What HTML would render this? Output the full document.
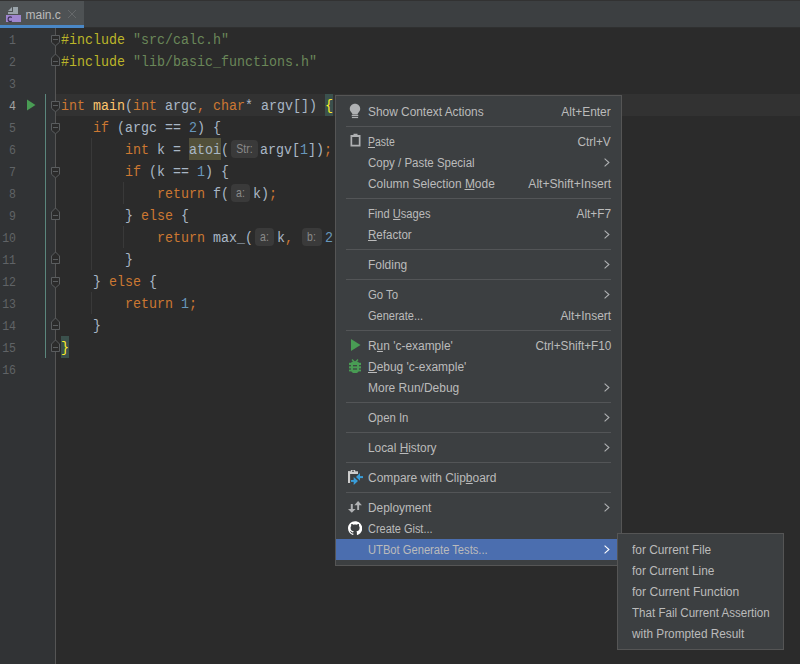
<!DOCTYPE html>
<html><head><meta charset="utf-8"><style>
*{margin:0;padding:0;box-sizing:border-box}
html,body{width:800px;height:664px;overflow:hidden;background:#2B2B2B}
body{position:relative;font-family:"Liberation Sans",sans-serif}
#tabbar{position:absolute;left:0;top:0;width:800px;height:28px;background:#3C3F41;border-top:1px solid #323232;border-bottom:1px solid #2F3030}
#tab{position:absolute;left:0;top:0;width:84px;height:27px;background:#4E5254}
#tab .ul{position:absolute;left:0;top:24px;width:84px;height:3px;background:#4A88C7}
#tab .name{position:absolute;left:25.5px;top:7px;font-size:12px;color:#BBBBBB;line-height:15px}
#tab .x{position:absolute;left:67px;top:8px}
#gutter{position:absolute;left:0;top:28px;width:55px;height:636px;background:#313335}
.curline{position:absolute;left:56px;top:94px;width:744px;height:22px;background:#323232}
.ln{position:absolute;left:0;width:16px;text-align:right;font-family:"Liberation Mono",monospace;font-size:11.5px;transform:translateY(2px) scaleY(1.09);transform-origin:0 14px;color:#606366;line-height:22px}
.code{position:absolute;left:61px;height:22px;font-family:"Liberation Mono",monospace;font-size:13.333px;line-height:22px;color:#A9B7C6;white-space:pre}
.code span{display:inline-block;vertical-align:top;height:22px}
.code{transform:translateY(2px) scaleY(1.15);transform-origin:0 14px}
.kw{color:#CC7832}.pp{color:#BBB529}.str{color:#6A8759}.num{color:#6897BB}.fn{color:#FFC66D}
.br{color:#FFEF28}
.bg{position:absolute}
.hint{position:relative}
.hint i{position:absolute;top:0px;height:18px;color:#8A8A8A;font-style:normal;font-family:"Liberation Sans",sans-serif;font-size:10.5px;line-height:18px;text-align:center}
#menu{position:absolute;left:335px;top:95px;width:287px;height:471px;background:#3C3F41;border:1px solid #555555}
.mi{position:absolute;left:0;width:285px;height:21px;font-size:12px;line-height:21px;color:#BBBBBB;white-space:nowrap}
.mi .t{position:absolute;left:32px;top:1px;transform-origin:0 0}
.mi .k{position:absolute;right:10px;top:1px;transform-origin:100% 0}
.mi svg{position:absolute}
.sep{position:absolute;left:10px;width:265px;height:1px;background:#535557}
.sel{background:#4B6EAF}
.u{position:relative}
.u:after{content:"";position:absolute;left:0;right:0;top:12px;height:1px;background:#BBBBBB}
#sub{position:absolute;left:617px;top:533px;width:167px;height:117px;background:#3C3F41;border:1px solid #555555}
.si{position:absolute;transform-origin:0 0;left:14px;height:21px;padding-top:1px;font-size:12px;line-height:21px;color:#BBBBBB;white-space:nowrap}
</style></head><body>
<div id="tabbar"><div id="tab">
<svg style="position:absolute;left:0;top:-1px" width="24" height="24" viewBox="0 0 24 24">
<path d="M8 11 L12 7 L12 11 Z" fill="#9AA4AB"/>
<path d="M13 7 H18 V14 H8 V12 H13 Z" fill="#9AA4AB"/>
<rect x="6" y="15" width="15" height="7" fill="#9F86CF"/>
<path d="M11.8 17.5 C11.3 17.1 10.8 16.9 10.2 16.9 C8.9 16.9 8.1 17.9 8.1 19.3 C8.1 20.7 8.9 21.6 10.2 21.6 C10.8 21.6 11.3 21.4 11.8 21" fill="none" stroke="#3A2F55" stroke-width="1.1"/>
</svg>
<div class="name">main.c</div>
<svg class="x" width="10" height="10" viewBox="0 0 10 10"><path d="M1 1 L9 9 M9 1 L1 9" stroke="#65686A" stroke-width="1"/></svg>
<div class="ul"></div></div></div>
<div id="gutter"></div>
<div class="curline"></div>
<svg style="position:absolute;left:0;top:0" width="62" height="664" viewBox="0 0 62 664">
<line x1="55.5" y1="28" x2="55.5" y2="664" stroke="#555555" stroke-width="1"/>
<line x1="45.5" y1="94" x2="45.5" y2="358" stroke="#5B877D" stroke-width="1"/>
<path d="M27 99.5 L35.5 105 L27 110.5 Z" fill="#499C54"/>
<path d="M51.5 35.5 H59.5 V42.3 L55.5 45.8 L51.5 42.3 Z" fill="#2B2B2B" stroke="#5A5D5F" stroke-width="1"/><line x1="53" y1="39.5" x2="58" y2="39.5" stroke="#5A5D5F"/>
<path d="M51.5 101.5 H59.5 V108.3 L55.5 111.8 L51.5 108.3 Z" fill="#2B2B2B" stroke="#5A5D5F" stroke-width="1"/><line x1="53" y1="105.5" x2="58" y2="105.5" stroke="#5A5D5F"/>
<path d="M51.5 123.5 H59.5 V130.3 L55.5 133.8 L51.5 130.3 Z" fill="#2B2B2B" stroke="#5A5D5F" stroke-width="1"/><line x1="53" y1="127.5" x2="58" y2="127.5" stroke="#5A5D5F"/>
<path d="M51.5 167.5 H59.5 V174.3 L55.5 177.8 L51.5 174.3 Z" fill="#2B2B2B" stroke="#5A5D5F" stroke-width="1"/><line x1="53" y1="171.5" x2="58" y2="171.5" stroke="#5A5D5F"/>
<path d="M51.5 277.5 H59.5 V284.3 L55.5 287.8 L51.5 284.3 Z" fill="#2B2B2B" stroke="#5A5D5F" stroke-width="1"/><line x1="53" y1="281.5" x2="58" y2="281.5" stroke="#5A5D5F"/>
<path d="M51.5 65.5 H59.5 V58 L55.5 54 L51.5 58 Z" fill="#2B2B2B" stroke="#5A5D5F" stroke-width="1"/><line x1="53" y1="61.5" x2="58" y2="61.5" stroke="#5A5D5F"/>
<path d="M51.5 219.5 H59.5 V212 L55.5 208 L51.5 212 Z" fill="#2B2B2B" stroke="#5A5D5F" stroke-width="1"/><line x1="53" y1="215.5" x2="58" y2="215.5" stroke="#5A5D5F"/>
<path d="M51.5 263.5 H59.5 V256 L55.5 252 L51.5 256 Z" fill="#2B2B2B" stroke="#5A5D5F" stroke-width="1"/><line x1="53" y1="259.5" x2="58" y2="259.5" stroke="#5A5D5F"/>
<path d="M51.5 329.5 H59.5 V322 L55.5 318 L51.5 322 Z" fill="#2B2B2B" stroke="#5A5D5F" stroke-width="1"/><line x1="53" y1="325.5" x2="58" y2="325.5" stroke="#5A5D5F"/>
<path d="M51.5 351.5 H59.5 V344 L55.5 340 L51.5 344 Z" fill="#2B2B2B" stroke="#5A5D5F" stroke-width="1"/><line x1="53" y1="347.5" x2="58" y2="347.5" stroke="#5A5D5F"/>
</svg>
<div class="ln" style="top:28px;color:#606366">1</div>
<div class="ln" style="top:50px;color:#606366">2</div>
<div class="ln" style="top:72px;color:#606366">3</div>
<div class="ln" style="top:94px;color:#A4A3A3">4</div>
<div class="ln" style="top:116px;color:#606366">5</div>
<div class="ln" style="top:138px;color:#606366">6</div>
<div class="ln" style="top:160px;color:#606366">7</div>
<div class="ln" style="top:182px;color:#606366">8</div>
<div class="ln" style="top:204px;color:#606366">9</div>
<div class="ln" style="top:226px;color:#606366">10</div>
<div class="ln" style="top:248px;color:#606366">11</div>
<div class="ln" style="top:270px;color:#606366">12</div>
<div class="ln" style="top:292px;color:#606366">13</div>
<div class="ln" style="top:314px;color:#606366">14</div>
<div class="ln" style="top:336px;color:#606366">15</div>
<div class="ln" style="top:358px;color:#606366">16</div>
<div class="bg" style="left:325px;top:94px;width:8px;height:22px;background:#3B514D;border-radius:0px"></div>
<div class="bg" style="left:61px;top:336px;width:8px;height:22px;background:#3B514D;border-radius:0px"></div>
<div class="bg" style="left:189px;top:138px;width:32px;height:22px;background:#52503A;border-radius:0px"></div>
<div class="bg" style="left:231px;top:140px;width:27px;height:18px;background:#3A3A3A;border-radius:4px"></div>
<div class="bg" style="left:231px;top:184px;width:19px;height:18px;background:#3A3A3A;border-radius:4px"></div>
<div class="bg" style="left:255px;top:228px;width:19px;height:18px;background:#3A3A3A;border-radius:4px"></div>
<div class="bg" style="left:302px;top:228px;width:20px;height:18px;background:#3A3A3A;border-radius:4px"></div>
<div class="bg" style="left:91px;top:138px;width:1px;height:132px;background:#393939;border-radius:0px"></div>
<div class="bg" style="left:123px;top:182px;width:1px;height:22px;background:#393939;border-radius:0px"></div>
<div class="bg" style="left:123px;top:226px;width:1px;height:22px;background:#393939;border-radius:0px"></div>
<div class="bg" style="left:91px;top:292px;width:1px;height:22px;background:#393939;border-radius:0px"></div>
<div class="code" style="top:28px"><span class="pp">#include</span><span> </span><span class="str">"src/calc.h"</span></div>
<div class="code" style="top:50px"><span class="pp">#include</span><span> </span><span class="str">"lib/basic_functions.h"</span></div>
<div class="code" style="top:94px"><span class="kw">int</span><span> </span><span class="fn">main</span><span>(</span><span class="kw">int</span><span> argc</span><span class="kw">,</span><span> </span><span class="kw">char</span><span>* argv[]) </span><span class="br">{</span></div>
<div class="code" style="top:116px"><span>    </span><span class="kw">if</span><span> (argc == </span><span class="num">2</span><span>) {</span></div>
<div class="code" style="top:138px"><span>        </span><span class="kw">int</span><span> k = </span><span>atoi</span><span>(</span><span class="hint" style="width:31px"><i style="left:2px;width:27px">Str:</i></span><span>argv[</span><span class="num">1</span><span>])</span><span class="kw">;</span></div>
<div class="code" style="top:160px"><span>        </span><span class="kw">if</span><span> (k == </span><span class="num">1</span><span>) {</span></div>
<div class="code" style="top:182px"><span>            </span><span class="kw">return</span><span> f(</span><span class="hint" style="width:24px"><i style="left:2px;width:19px">a:</i></span><span>k)</span><span class="kw">;</span></div>
<div class="code" style="top:204px"><span>        } </span><span class="kw">else</span><span> {</span></div>
<div class="code" style="top:226px"><span>            </span><span class="kw">return</span><span> max_(</span><span class="hint" style="width:24px"><i style="left:2px;width:19px">a:</i></span><span>k</span><span class="kw">,</span><span> </span><span class="hint" style="width:24px"><i style="left:1px;width:19px">b:</i></span><span class="num">2</span><span>)</span><span class="kw">;</span></div>
<div class="code" style="top:248px"><span>        }</span></div>
<div class="code" style="top:270px"><span>    } </span><span class="kw">else</span><span> {</span></div>
<div class="code" style="top:292px"><span>        </span><span class="kw">return</span><span> </span><span class="num">1</span><span class="kw">;</span></div>
<div class="code" style="top:314px"><span>    }</span></div>
<div class="code" style="top:336px"><span class="br">}</span></div>
<div id="menu">
<div class="mi" style="top:5px"><svg style="left:13px;top:2px" width="12" height="17" viewBox="0 0 12 17"><path d="M6 0.8 C3.1 0.8 0.8 3 0.8 5.8 C0.8 7.6 1.7 8.7 2.6 9.7 C3.1 10.2 3.4 10.8 3.4 11.5 H8.6 C8.6 10.8 8.9 10.2 9.4 9.7 C10.3 8.7 11.2 7.6 11.2 5.8 C11.2 3 8.9 0.8 6 0.8 Z" fill="#AFB1B3"/><rect x="2.7" y="11.9" width="6.6" height="1.3" fill="#AFB1B3"/><rect x="2.9" y="14" width="6.2" height="1.1" fill="#AFB1B3"/></svg><span class="t" style="transform:scaleX(0.991)">Show Context Actions</span><span class="k" style="transform:scaleX(0.994)">Alt+Enter</span></div>
<div class="sep" style="top:30px"></div>
<div class="mi" style="top:35px"><svg style="left:14px;top:2px" width="11" height="14" viewBox="0 0 11 14"><path d="M0.5 2 H3.5 V0.8 H7.5 V2 H10.5 V13.5 H0.5 Z M2.2 4 V11.8 H8.8 V4 Z" fill="#AFB1B3" fill-rule="evenodd"/></svg><span class="t" style="transform:scaleX(0.871)"><span class="u">P</span>aste</span><span class="k" style="transform:scaleX(0.985)">Ctrl+V</span></div>
<div class="mi" style="top:56px"><span class="t" style="transform:scaleX(0.957)">Copy / Paste Special</span><svg style="left:267.5px;top:5.5px" width="7" height="10" viewBox="0 0 7 10"><path d="M0.6 0.6 L4.9 4.5 L0.6 8.4" fill="none" stroke="#AFB1B3" stroke-width="1.1"/></svg></div>
<div class="mi" style="top:77px"><span class="t" style="transform:scaleX(0.995)">Column Selection <span class="u">M</span>ode</span><span class="k" style="transform:scaleX(1.008)">Alt+Shift+Insert</span></div>
<div class="sep" style="top:102px"></div>
<div class="mi" style="top:107px"><span class="t" style="transform:scaleX(0.927)">Find <span class="u">U</span>sages</span><span class="k" style="transform:scaleX(0.986)">Alt+F7</span></div>
<div class="mi" style="top:128px"><span class="t" style="transform:scaleX(0.964)"><span class="u">R</span>efactor</span><svg style="left:267.5px;top:5.5px" width="7" height="10" viewBox="0 0 7 10"><path d="M0.6 0.6 L4.9 4.5 L0.6 8.4" fill="none" stroke="#AFB1B3" stroke-width="1.1"/></svg></div>
<div class="sep" style="top:153px"></div>
<div class="mi" style="top:158px"><span class="t" style="transform:scaleX(0.997)">Folding</span><svg style="left:267.5px;top:5.5px" width="7" height="10" viewBox="0 0 7 10"><path d="M0.6 0.6 L4.9 4.5 L0.6 8.4" fill="none" stroke="#AFB1B3" stroke-width="1.1"/></svg></div>
<div class="sep" style="top:183px"></div>
<div class="mi" style="top:188px"><span class="t" style="transform:scaleX(0.947)">Go To</span><svg style="left:267.5px;top:5.5px" width="7" height="10" viewBox="0 0 7 10"><path d="M0.6 0.6 L4.9 4.5 L0.6 8.4" fill="none" stroke="#AFB1B3" stroke-width="1.1"/></svg></div>
<div class="mi" style="top:209px"><span class="t" style="transform:scaleX(0.918)">Generate...</span><span class="k" style="transform:scaleX(0.992)">Alt+Insert</span></div>
<div class="sep" style="top:234px"></div>
<div class="mi" style="top:239px"><svg style="left:13px;top:4px" width="12" height="12" viewBox="0 0 12 12"><path d="M2 0 L11.5 6 L2 12 Z" fill="#499C54"/></svg><span class="t" style="transform:scaleX(0.994)">R<span class="u">u</span>n 'c-example'</span><span class="k" style="transform:scaleX(0.982)">Ctrl+Shift+F10</span></div>
<div class="mi" style="top:260px"><svg style="left:13px;top:3px" width="12" height="15" viewBox="0 0 12 15"><path d="M3 0.6 L5.6 3.2 M9 0.6 L6.4 3.2" stroke="#499C54" stroke-width="1.4"/><path d="M4 2.6 H8 Q10 2.6 10 4.6 V10.4 Q10 14 6 14 Q2 14 2 10.4 V4.6 Q2 2.6 4 2.6 Z" fill="#499C54"/><rect x="0" y="3.8" width="12" height="2.3" fill="#499C54"/><rect x="0" y="7.3" width="12" height="2.1" fill="#499C54"/><rect x="0" y="10.6" width="12" height="1.8" fill="#499C54"/><rect x="4" y="6.1" width="4" height="1.2" fill="#3C3F41"/><rect x="4" y="9.4" width="4" height="1.2" fill="#3C3F41"/></svg><span class="t" style="transform:scaleX(0.997)"><span class="u">D</span>ebug 'c-example'</span></div>
<div class="mi" style="top:281px"><span class="t" style="transform:scaleX(0.998)">More Run/Debug</span><svg style="left:267.5px;top:5.5px" width="7" height="10" viewBox="0 0 7 10"><path d="M0.6 0.6 L4.9 4.5 L0.6 8.4" fill="none" stroke="#AFB1B3" stroke-width="1.1"/></svg></div>
<div class="sep" style="top:306px"></div>
<div class="mi" style="top:311px"><span class="t" style="transform:scaleX(0.947)">Open In</span><svg style="left:267.5px;top:5.5px" width="7" height="10" viewBox="0 0 7 10"><path d="M0.6 0.6 L4.9 4.5 L0.6 8.4" fill="none" stroke="#AFB1B3" stroke-width="1.1"/></svg></div>
<div class="sep" style="top:336px"></div>
<div class="mi" style="top:341px"><span class="t" style="transform:scaleX(0.988)">Local <span class="u">H</span>istory</span><svg style="left:267.5px;top:5.5px" width="7" height="10" viewBox="0 0 7 10"><path d="M0.6 0.6 L4.9 4.5 L0.6 8.4" fill="none" stroke="#AFB1B3" stroke-width="1.1"/></svg></div>
<div class="sep" style="top:366px"></div>
<div class="mi" style="top:371px"><svg style="left:0;top:0" width="30" height="21" viewBox="0 0 30 21"><rect x="12" y="4.3" width="2.1" height="11.7" fill="#CDCDCD"/><rect x="12" y="4.3" width="10" height="2.7" fill="#CDCDCD"/><rect x="14.8" y="3" width="4.4" height="2" fill="#CDCDCD"/><rect x="16" y="3.7" width="2" height="1" fill="#3C3F41"/><path d="M14 14.2 L23 14.2 L24 18 L18 19 Z" fill="#3C3F41"/><rect x="15" y="13" width="4" height="1.9" fill="#3A9DD8"/><path d="M17.7 10 L22 13.9 L17.7 17.9 Z" fill="#3A9DD8"/><rect x="23.5" y="9.1" width="3.5" height="2" fill="#3A9DD8"/><path d="M24 6.1 L20 10 L24 13.8 Z" fill="#3A9DD8"/></svg><span class="t" style="transform:scaleX(0.998)">Compare with Clip<span class="u">b</span>oard</span></div>
<div class="sep" style="top:396px"></div>
<div class="mi" style="top:401px"><svg style="left:0;top:0" width="30" height="21" viewBox="0 0 30 21"><rect x="14.8" y="7" width="2" height="6" fill="#AFB1B3"/><path d="M12 12 L19.6 12 L15.8 15.8 Z" fill="#AFB1B3"/><rect x="21.2" y="8" width="1.9" height="5" fill="#AFB1B3"/><path d="M18.3 8.2 L25.9 8.2 L22.1 4.1 Z" fill="#AFB1B3"/></svg><span class="t" style="transform:scaleX(0.988)">Deployment</span><svg style="left:267.5px;top:5.5px" width="7" height="10" viewBox="0 0 7 10"><path d="M0.6 0.6 L4.9 4.5 L0.6 8.4" fill="none" stroke="#AFB1B3" stroke-width="1.1"/></svg></div>
<div class="mi" style="top:422px"><svg style="left:12px;top:2.7px" width="14.2" height="14.2" viewBox="0 0 16 16"><path fill="#FFFFFF" d="M8 0.2C3.6 0.2 0 3.8 0 8.2c0 3.5 2.3 6.5 5.5 7.6.4.1.5-.2.5-.4v-1.4c-2.2.5-2.7-1-2.7-1-.4-.9-.9-1.2-.9-1.2-.7-.5.1-.5.1-.5.8.1 1.2.8 1.2.8.7 1.2 1.9.9 2.3.7.1-.5.3-.9.5-1.1-1.8-.2-3.6-.9-3.6-4 0-.9.3-1.6.8-2.1-.1-.2-.4-1 .1-2.1 0 0 .7-.2 2.2.8.6-.2 1.3-.3 2-.3s1.4.1 2 .3c1.5-1 2.2-.8 2.2-.8.4 1.1.2 1.9.1 2.1.5.6.8 1.3.8 2.1 0 3.1-1.9 3.700-3.600 3.900.3.3.5.8.5 1.500v2.200c0 .2.1.5.6.4 3.200-1.100 5.500-4.100 5.500-7.600C16 3.800 12.400 0.200 8 0.200z"/></svg><span class="t" style="transform:scaleX(0.913)">Create Gist...</span></div>
<div class="mi sel" style="top:443px"><span class="t" style="transform:scaleX(0.931)">UTBot Generate Tests...</span><svg style="left:267.5px;top:5.5px" width="7" height="10" viewBox="0 0 7 10"><path d="M0.6 0.6 L4.9 4.5 L0.6 8.4" fill="none" stroke="#FFFFFF" stroke-width="1.1"/></svg></div>
</div>
<div id="sub">
<div class="si" style="top:5px;transform:scaleX(0.990)">for Current File</div>
<div class="si" style="top:26px;transform:scaleX(0.988)">for Current Line</div>
<div class="si" style="top:47px;transform:scaleX(1.005)">for Current Function</div>
<div class="si" style="top:68px;transform:scaleX(0.965)">That Fail Current Assertion</div>
<div class="si" style="top:89px;transform:scaleX(0.984)">with Prompted Result</div>
</div>
</body></html>
